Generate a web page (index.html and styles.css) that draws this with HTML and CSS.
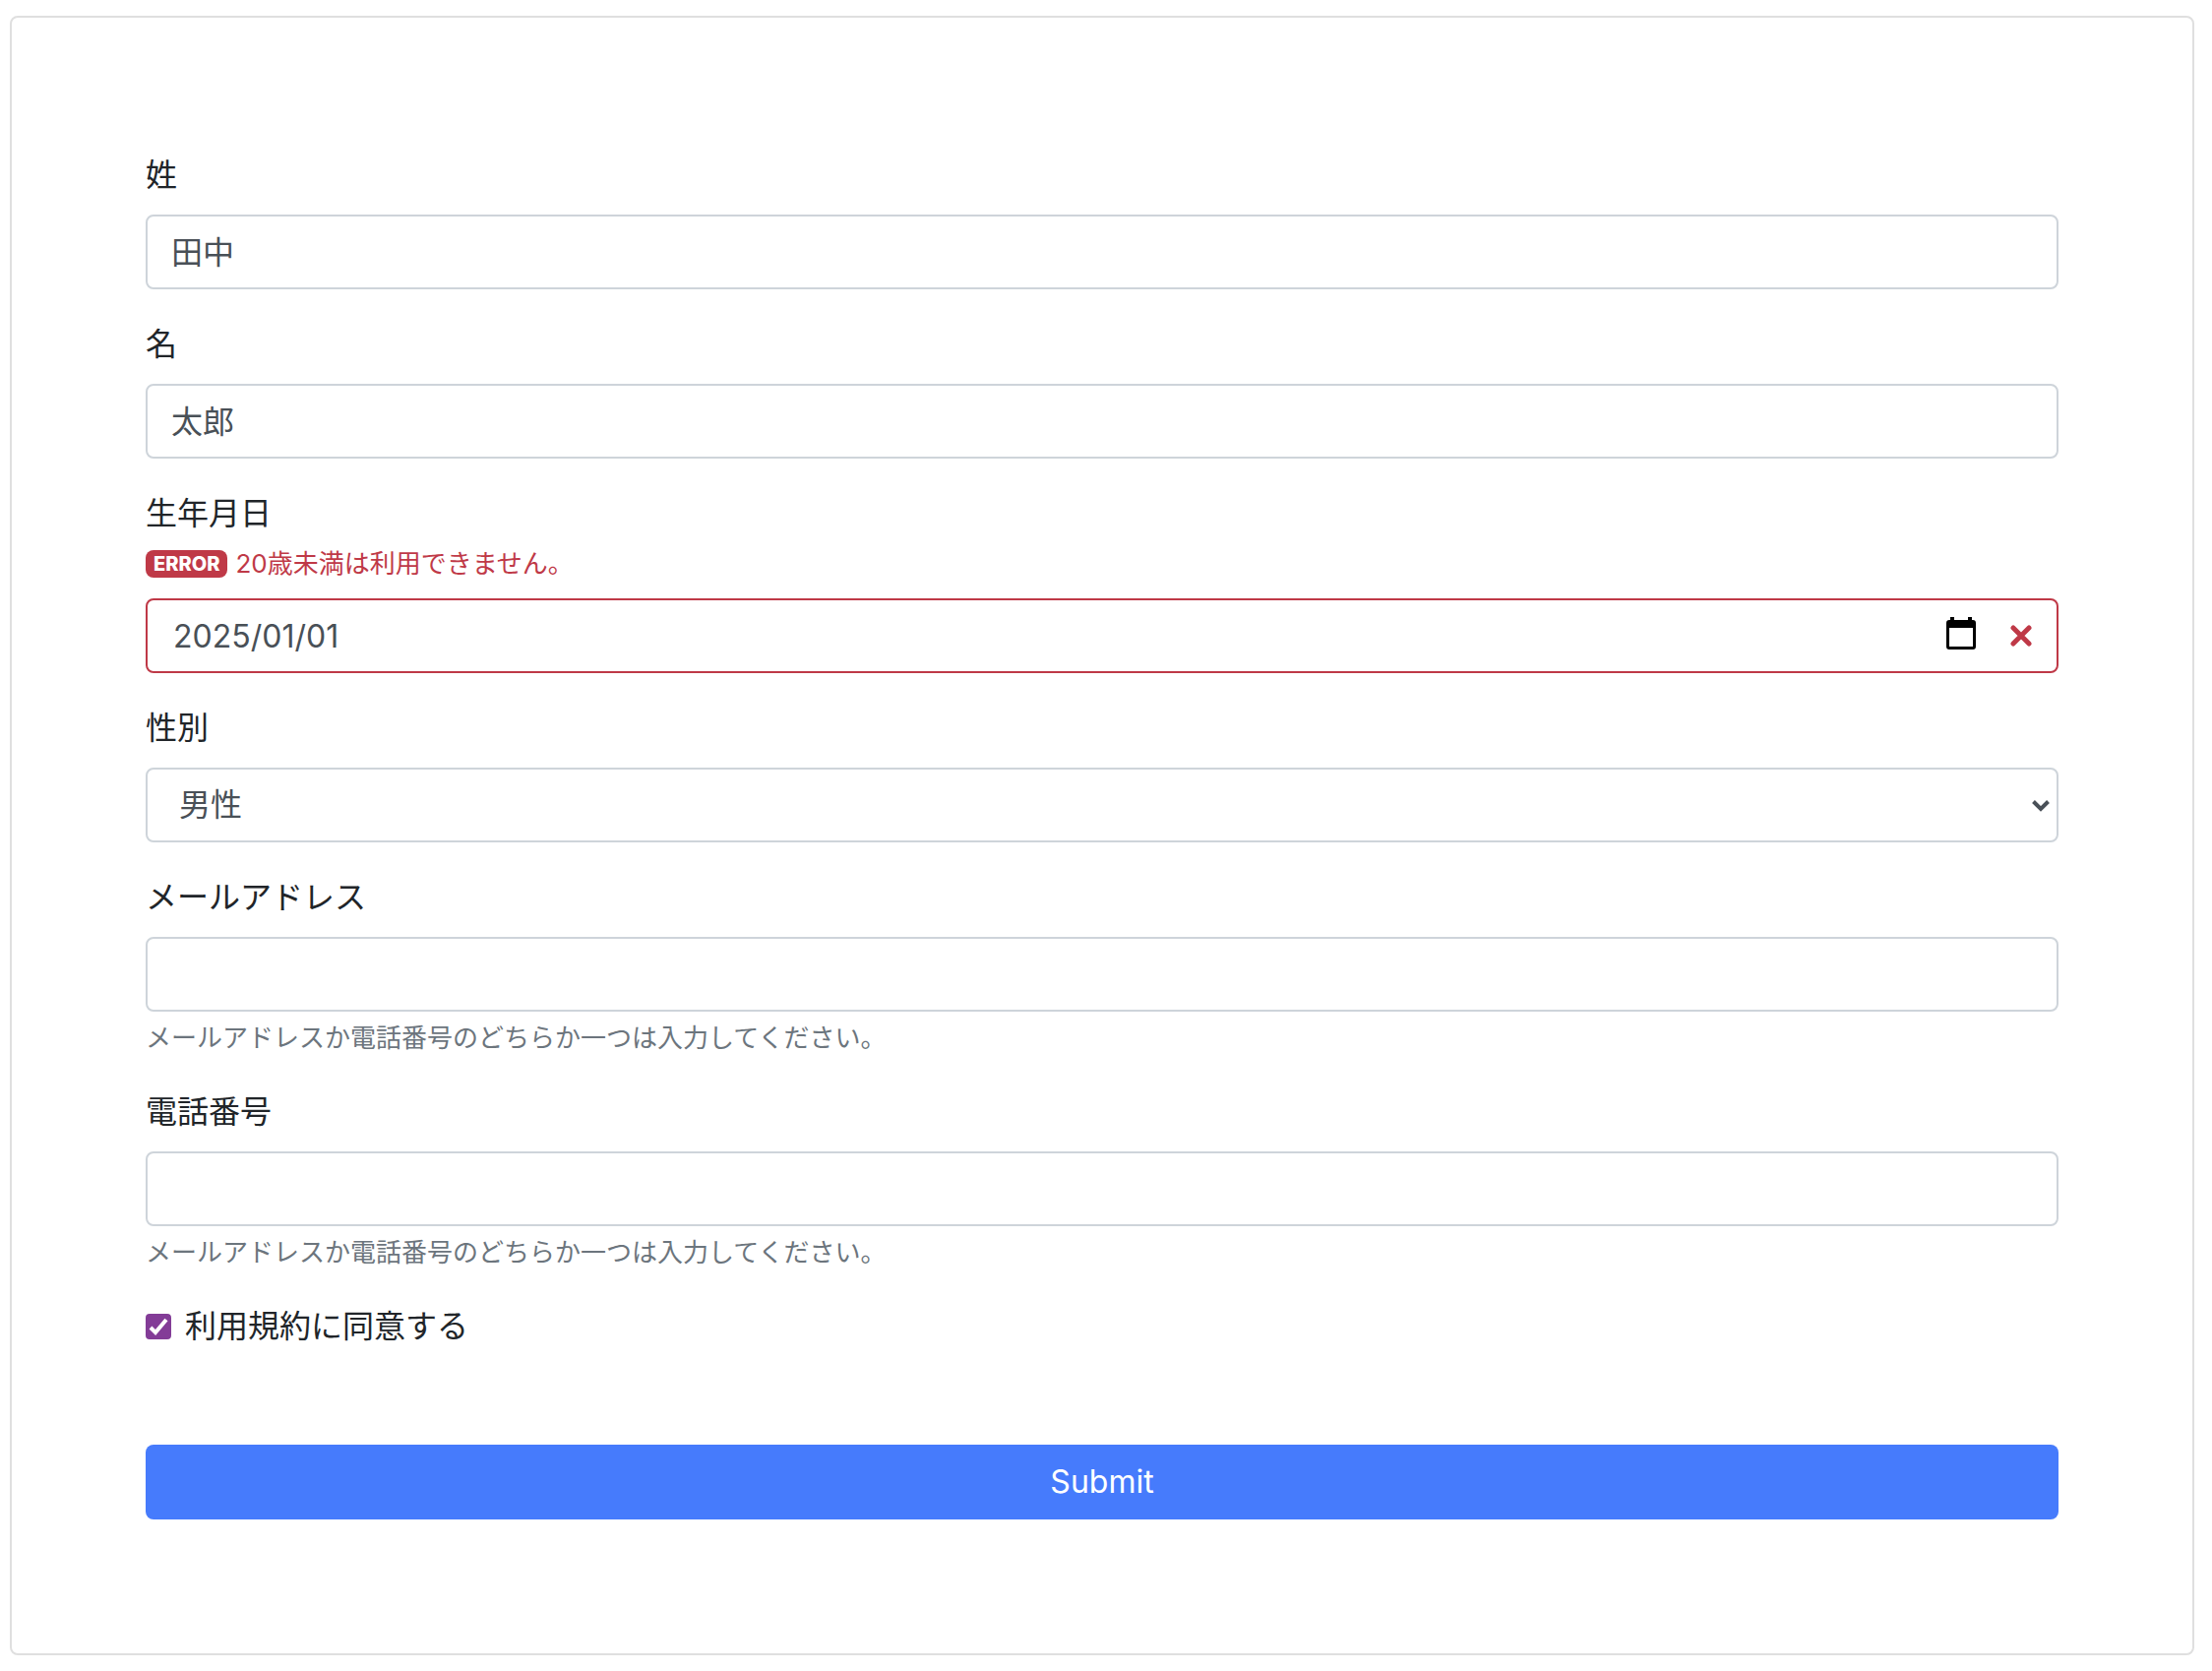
FILE: index.html
```html
<!DOCTYPE html>
<html lang="ja">
<head>
  <meta charset="UTF-8">
  <meta name="viewport" content="width=device-width, initial-scale=1">
  <title>Form</title>
  <link rel="stylesheet" href="styles.css">
</head>
<body>
  <form class="card">
    <div class="form-group">
      <label for="last-name">姓</label>
      <input class="form-control" id="last-name" type="text" value="田中">
    </div>

    <div class="form-group">
      <label for="first-name">名</label>
      <input class="form-control" id="first-name" type="text" value="太郎">
    </div>

    <div class="form-group">
      <label for="birthday">生年月日</label>
      <div class="error" id="birthday-error">
        <span class="badge">ERROR</span>
        <span>20歳未満は利用できません。</span>
      </div>
      <div class="control-wrap">
        <input class="form-control is-invalid" id="birthday" type="text" value="2025/01/01" aria-invalid="true" aria-describedby="birthday-error">
        <div class="control-icons">
          <button class="picker-btn" type="button" aria-label="カレンダー">
            <svg width="30" height="38" viewBox="0 0 30 38">
              <path d="M4 0h4v3h14V0h4v3h1a3 3 0 0 1 3 3v24a3 3 0 0 1-3 3H3a3 3 0 0 1-3-3V6a3 3 0 0 1 3-3h1zM3 11v19h24V11z" fill-rule="evenodd"/>
            </svg>
          </button>
          <svg class="cross" width="22" height="22" viewBox="0 0 22 22">
            <path d="M3 3l16 16M19 3L3 19"/>
          </svg>
        </div>
      </div>
    </div>

    <div class="form-group">
      <label for="gender">性別</label>
      <div class="control-wrap">
        <select class="form-control" id="gender">
          <option>男性</option>
          <option>女性</option>
        </select>
        <svg class="chevron" width="18" height="12" viewBox="0 0 18 12">
          <path d="M1.5 1.5L9 9l7.5-7.500"/>
        </svg>
      </div>
    </div>

    <div class="form-group">
      <label for="email">メールアドレス</label>
      <input class="form-control" id="email" type="email" aria-describedby="email-help">
      <small class="form-text" id="email-help">メールアドレスか電話番号のどちらか一つは入力してください。</small>
    </div>

    <div class="form-group">
      <label for="tel">電話番号</label>
      <input class="form-control" id="tel" type="tel" aria-describedby="tel-help">
      <small class="form-text" id="tel-help">メールアドレスか電話番号のどちらか一つは入力してください。</small>
    </div>

    <div class="form-check">
      <input id="agree" type="checkbox" checked>
      <label for="agree">利用規約に同意する</label>
    </div>

    <button class="btn" type="submit">Submit</button>
  </form>
</body>
</html>
```

FILE: styles.css
```css
* {
  box-sizing: border-box;
}
body {
  margin: 16px 18px 16px 10px;
  background: #fff;
  color: #212529;
  font-family: Inter, "Noto Sans CJK JP", sans-serif;
  font-size: 32px;
  line-height: 48px;
}
.card {
  display: flex;
  flex-direction: column;
  padding: 136px;
  border: 2px solid #dfdfdf;
  border-radius: 8px;
}
.form-group {
  display: flex;
  flex-direction: column;
  margin-bottom: 32px;
}
.form-group label {
  margin-bottom: 16px;
}

/* Inputs */
.form-control {
  width: 100%;
  height: 76px;
  padding: 10px 24px 14px;
  border: 2px solid #ced4da;
  border-radius: 8px;
  background: #fff;
  color: #495057;
  font: inherit;
}
.form-control.is-invalid {
  padding: 12px 128px 12px 26px;
  border-color: #bf3947;
}
select.form-control {
  appearance: none;
  padding: 12px 32px;
}
.control-wrap {
  position: relative;
}
.control-icons {
  position: absolute;
  top: 0;
  right: 27px;
  bottom: 0;
  display: flex;
  align-items: center;
  gap: 35px;
}
.picker-btn {
  display: flex;
  padding: 0;
  border: none;
  background: none;
  cursor: pointer;
}
.cross {
  fill: none;
  stroke: #bf3947;
  stroke-width: 5;
  stroke-linecap: round;
}
.chevron {
  position: absolute;
  top: 33px;
  right: 9px;
  fill: none;
  stroke: #495057;
  stroke-width: 4;
  pointer-events: none;
}

/* Messages */
.error {
  display: flex;
  align-items: center;
  gap: 8px;
  margin: -12px 0 12px;
  color: #bf3947;
  font-size: 26px;
  line-height: 46px;
}
.badge {
  padding: 0 8px;
  border-radius: 8px;
  background: #bf3947;
  color: #fff;
  font-size: 20px;
  font-weight: 800;
  line-height: 28px;
}
.form-text {
  margin-top: 8px;
  color: #6c757d;
  font-size: 26px;
  line-height: 38px;
}

/* Agreement and submit */
.form-check {
  display: flex;
  align-items: center;
  gap: 14px;
  margin-bottom: 96px;
}
.form-check input {
  appearance: none;
  width: 26px;
  height: 26px;
  margin: 0;
  border: 2px solid #833c97;
  border-radius: 4px;
}
.form-check input:checked {
  background: #833c97 url("data:image/svg+xml,%3Csvg xmlns='http://www.w3.org/2000/svg' viewBox='0 0 26 26'%3E%3Cpath d='M5 14l5 5L21 6' fill='none' stroke='%23fff' stroke-width='4'/%3E%3C/svg%3E") center / 26px 26px border-box;
}
.btn {
  height: 76px;
  border: none;
  border-radius: 8px;
  background: #467bfc;
  color: #fff;
  font: inherit;
  cursor: pointer;
}
```
